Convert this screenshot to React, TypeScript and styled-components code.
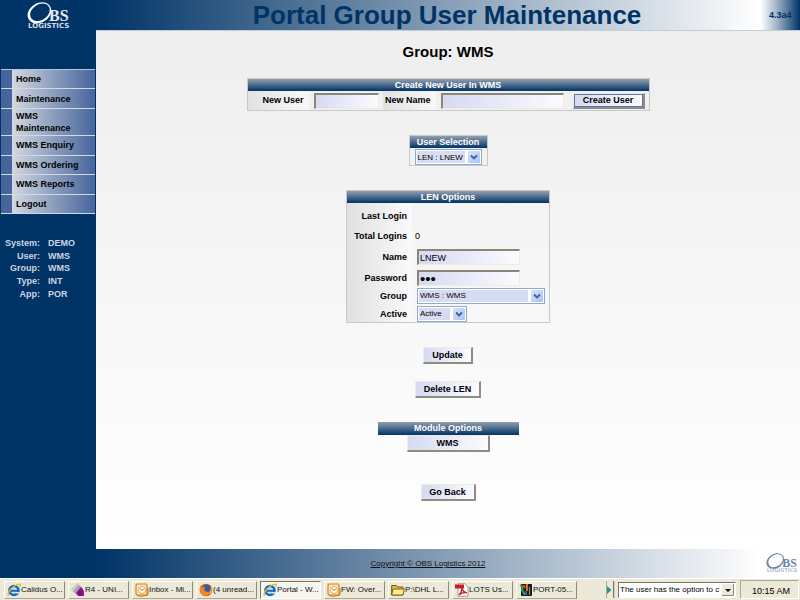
import React from "react";
import styled, { createGlobalStyle, css } from "styled-components";

const NAVY = "#003366";
const SANS = '"Liberation Sans", Arial, sans-serif';

const GlobalStyle = createGlobalStyle`
  *, *::before, *::after { box-sizing: border-box; }
  body { margin: 0; background: #fff; font-family: ${SANS}; font-size: 9px; color: #000; }
  h1, h2, h3, p, dl, dd, ul { margin: 0; padding: 0; }
`;

const Page = styled.div`
  display: flex;
  flex-direction: column;
  min-height: 100vh;
`;

const band = css`
  background: linear-gradient(to right, ${NAVY} 96px, #fff 95%);
`;

const Header = styled.header`
  ${band}
  display: flex;
  height: 30px;
`;

const Brand = styled.div`
  width: 96px;
  padding: 2px 0 0 27px;
`;

const Title = styled.h1`
  flex: 1;
  padding-left: 36px;
  text-align: center;
  font-size: 26px;
  line-height: 30px;
  color: ${NAVY};
  white-space: nowrap;
`;

const Version = styled.div`
  width: 38px;
  padding-left: 7px;
  font-weight: bold;
  line-height: 30px;
  color: ${NAVY};
  background: linear-gradient(to right, #f6f8fa, #a9bbcd 35%, ${NAVY});
`;

const Body = styled.div`
  flex: 1;
  display: flex;
  background: ${NAVY};
`;

const Sidebar = styled.aside`
  width: 96px;
  padding: 39px 1px 0;
  flex: none;
`;

const Menu = styled.ul`
  display: flex;
  flex-direction: column;
  min-height: 145px;
  list-style: none;
  border-top: 1px solid #b9c5d8;
`;

const MenuItem = styled.li`
  flex: 1 0 auto;
  display: flex;
  border-bottom: 1px solid #d3dae6;
  background: linear-gradient(to right, #46659c 11px, #d3d8e0 11px, #46659c);
`;

const MenuLink = styled.a`
  flex: 1;
  display: flex;
  align-items: center;
  min-height: 18px;
  padding: 1px 4px 1px 15px;
  font-weight: bold;
  line-height: 12px;
  color: #000;
  text-decoration: none;
`;

const Session = styled.dl`
  display: grid;
  grid-template-columns: 39px 1fr;
  column-gap: 8px;
  align-items: center;
  min-height: 63px;
  margin-top: 23px;
  font-weight: bold;
  color: #ccd6e2;
`;

const SessionKey = styled.dt`
  text-align: right;
`;

const Main = styled.main`
  flex: 1;
  display: flex;
  flex-direction: column;
  align-items: center;
  padding-bottom: 48px;
  border-top: 1px solid #c3cdd8;
  background: linear-gradient(#eee, #fff);
`;

const GroupName = styled.h2`
  margin: 12px 0 17px;
  font-size: 15px;
  line-height: 18px;
`;

const Panel = styled.section`
  border: 1px solid #c6c8ca;
  margin-bottom: 24px;
`;

const PanelTitle = styled.h3`
  height: 12px;
  font-size: 9px;
  line-height: 12px;
  text-align: center;
  color: #fff;
  background: linear-gradient(#93a0b0, ${NAVY});
`;

const CreateRow = styled.form`
  display: flex;
  align-items: stretch;
  height: 19px;
`;

const CellLabel = styled.label<{ $width: number }>`
  width: ${(p) => p.$width}px;
  padding-right: 5px;
  font-weight: bold;
  line-height: 18px;
  text-align: right;
  background: linear-gradient(to right, #e2e2e2, #f8f8f8);
`;

const Cell = styled.div`
  display: flex;
  align-items: center;
  padding: 0 4px 0 5px;
`;

const TextInput = styled.input<{ $width: number }>`
  width: ${(p) => p.$width}px;
  height: 16px;
  padding: 0 1px;
  font: 9px ${SANS};
  color: #000;
  border: 1px solid;
  border-width: 2px 1px 1px 2px;
  border-color: #8a8778 #efede2 #efede2 #8a8778;
  border-radius: 0;
  background: linear-gradient(to right, #d6daf2, #fbfbfe);
  outline: none;

  &[type="password"] { font-size: 15px; }
`;

const Button = styled.button<{ $width: number; $focused?: boolean }>`
  width: ${(p) => p.$width}px;
  height: 17px;
  padding: 0;
  font: bold 9px ${SANS};
  color: #000;
  border: 2px solid;
  border-color: #efede0 #8f8c80 #8f8c80 #efede0;
  border-width: 1px 2px 2px 1px;
  border-radius: 0;
  background: linear-gradient(to right, #d5daf3, #fbfbff);
  ${(p) => p.$focused && css`
    height: 16px;
    box-shadow: inset 0 0 0 1px #5877ac;
  `}
`;

const SelectBox = styled.span<{ $width: number }>`
  position: relative;
  display: inline-flex;
  width: ${(p) => p.$width}px;
  height: 16px;
  padding: 1px;
  border: 1px solid #8fabc9;
  background: #fff;

  select {
    flex: 1;
    min-width: 0;
    margin-right: 15px;
    padding: 0 1px;
    appearance: none;
    border: 0;
    border-radius: 0;
    outline: none;
    font: 8px ${SANS};
    color: #000;
    background: #d8dcf2;
  }

  svg {
    position: absolute;
    top: 1px;
    right: 1px;
    pointer-events: none;
  }
`;

const SelectionRow = styled.div`
  display: flex;
  justify-content: center;
  padding: 1px 5px 0;
`;

const OptionsForm = styled.form`
  display: grid;
  grid-template-columns: 65px 1fr;
  grid-template-rows: 20px 19px 24px 17px 19px 17px;
  align-items: center;
  padding-top: 3px;
  background: linear-gradient(to right, #e0e0e0, #fafafa) no-repeat 0 0 / 65px 100%;
`;

const OptionLabel = styled.label`
  padding-right: 5px;
  font-weight: bold;
  text-align: right;
`;

const OptionValue = styled.div`
  display: flex;
  padding: 0 4px 0 5px;
`;

const PlainValue = styled.output`
  padding-left: 3px;
`;

const Actions = styled.div`
  display: flex;
  flex-direction: column;
  align-items: center;
  gap: 17px;
  margin-bottom: 24px;
`;

const Modules = styled.section`
  display: flex;
  flex-direction: column;
  align-items: center;
  width: 141px;
  margin-bottom: 32px;

  h3 { width: 100%; height: 13px; }
`;

const Footer = styled.footer`
  ${band}
  display: flex;
  align-items: center;
  height: 29px;
  padding: 0 2px 0 90px;
`;

const Copyright = styled.a`
  margin: 0 auto;
  font-size: 8px;
  color: #111;
  text-decoration: underline;
`;

const Taskbar = styled.nav`
  display: flex;
  align-items: center;
  height: 23px;
  padding: 0 1px 0 4px;
  border-top: 1px solid #fff;
  border-bottom: 1px solid #8e8b7d;
  background: #ece9d8;
`;

const TaskList = styled.div`
  display: grid;
  grid-template-columns: repeat(9, 61px);
  gap: 3px;
`;

const Task = styled.button<{ $active?: boolean }>`
  display: flex;
  align-items: center;
  height: 18px;
  padding: 0 0 0 2px;
  font: 8px ${SANS};
  color: #111;
  white-space: nowrap;
  border: 1px solid;
  border-color: #fffef8 #8e8b7d #aca899 #fffef8;
  border-radius: 0;
  background: #ece9d8;
  ${(p) => p.$active && css`
    border-color: #77756a #fff #fff #77756a;
    background: #f6f5ef;
  `}
  svg { flex: none; }
`;

const Grip = styled.span`
  display: flex;
  align-items: center;
  width: 9px;
  height: 17px;
  margin-left: auto;
  margin-right: 3px;
  border-left: 1px solid #aca899;
  border-right: 2px groove #cfccbd;
`;

const AddressBox = styled.span`
  position: relative;
  display: flex;
  width: 118px;
  height: 16px;
  border: 1px solid;
  border-color: #77756a #fff #fff #77756a;
  background: #fff;

  select {
    flex: 1;
    min-width: 0;
    margin-right: 12px;
    padding: 0 0 0 1px;
    appearance: none;
    border: 0;
    border-radius: 0;
    outline: none;
    font: 8px ${SANS};
    color: #000;
    background: #fff;
    text-overflow: clip;
  }

  svg {
    position: absolute;
    top: 1px;
    right: 1px;
    pointer-events: none;
  }
`;

const Clock = styled.time`
  width: 59px;
  height: 19px;
  margin-left: 4px;
  padding: 3px 8px 0 0;
  text-align: right;
  font-size: 9px;
  line-height: 14px;
  border: 1px solid;
  border-color: #aca899 #fff #fff #aca899;
`;

function ObsLogo({ width, ring, ink, small }: { width: number; ring: string; ink: string; small: string }) {
  return (
    <svg width={width} viewBox="0 0 43 27" role="img" aria-label="OBS Logistics">
      <g transform="rotate(-32 12.5 11)">
        <path
          fillRule="evenodd"
          fill={ring}
          d="M12.5 1.2c7 0 12.600 4.200 12.600 9.600s-5.600 9.700-12.600 9.700S0 16.200 0 10.800 5.500 1.200 12.500 1.200zM13.300 2.900c-6 0-10.600 3.500-10.600 7.900s4.500 7.600 10.400 7.600 10.700-3.300 10.700-7.700-4.500-7.800-10.500-7.800z"
        />
      </g>
      <text x="22" y="19" fontFamily="Liberation Serif, serif" fontWeight="bold" fontSize="16" fill={ink}>BS</text>
      <text x="1" y="26" fontFamily="DejaVu Sans, sans-serif" fontWeight="bold" fontSize="7" fill={small}>LOGISTICS</text>
    </svg>
  );
}

function SelectArrow() {
  return (
    <svg width="12" height="12" viewBox="0 0 12 12" aria-hidden="true">
      <defs>
        <linearGradient id="selectArrowFill" x1="0" y1="0" x2="1" y2="1">
          <stop offset="0" stopColor="#d5e2fd" />
          <stop offset="1" stopColor="#a9c3f7" />
        </linearGradient>
      </defs>
      <rect width="12" height="12" rx="1" fill="url(#selectArrowFill)" />
      <path d="M3 4.500l3 3 3-3" fill="none" stroke="#44618f" strokeWidth="1.800" />
    </svg>
  );
}

function Select({ id, width, value, label }: { id: string; width: number; value: string; label?: string }) {
  return (
    <SelectBox $width={width}>
      <select id={id} aria-label={label} defaultValue={value}>
        <option>{value}</option>
      </select>
      <SelectArrow />
    </SelectBox>
  );
}

type IconName = "ie" | "diamond" | "mail" | "fox" | "folder" | "pdf" | "bars";

const ICONS: Record<IconName, React.ReactNode> = {
  ie: (
    <>
      <circle cx="7" cy="7.500" r="4.500" fill="#bfe3fa" stroke="#1769c0" strokeWidth="2.600" />
      <path d="M4 7.800h8" stroke="#1769c0" strokeWidth="2" />
      <path d="M9 9.800h4" stroke="#ece9d8" strokeWidth="1.500" />
      <path d="M1.500 13C-.5 10 6 2 12.500 1.200c1.300 0 .9 1.800.2 2.800" fill="none" stroke="#e8b42a" strokeWidth="1.300" />
    </>
  ),
  diamond: (
    <>
      <path d="M0 6.500L6.500 0 12 6 6 12z" fill="#a5a5a9" />
      <path d="M0 6.500L6.500 0 8 1.600 2 8.500z" fill="#cfcfd2" />
      <path d="M5 10l5-6 3 4v5H7z" fill="#96119b" />
      <path d="M9 8v5" stroke="#4a0752" />
    </>
  ),
  mail: (
    <>
      <rect x="1" y="1" width="11" height="11" rx="1.500" fill="#fbe3b4" stroke="#d9822b" strokeWidth="1.200" />
      <circle cx="7" cy="7" r="3.600" fill="#fffbe8" stroke="#e8b45c" />
      <path d="M5 5.500l2 2.300 2.300-2.300" stroke="#b87426" fill="none" />
      <path d="M2 12.500l4 .8 7-1.300V5" fill="none" stroke="#c5772a" />
    </>
  ),
  fox: (
    <>
      <circle cx="7" cy="7" r="6.300" fill="#d9541a" />
      <circle cx="7.500" cy="5.800" r="4" fill="#2b5fb0" />
      <path d="M1 3l2 1.500c1-1 2.300-.8 3 0L5 6.500c1 2.500 4 3 6 1.500-.5 4-3 5-5 5C2.500 13 .5 9 1 3z" fill="#f08a1f" />
      <path d="M12 3c1.500 3 1 7-2 9 1.500-3 2-6 2-9z" fill="#f8c53a" />
    </>
  ),
  folder: (
    <>
      <path d="M.7 12V2.500h4.600L6.500 4H12v8z" fill="#e9bd3c" stroke="#5c4a10" strokeWidth=".9" />
      <path d="M.7 12L2 6h11.300L12 12z" fill="#ffe98a" stroke="#6d5713" strokeWidth=".9" />
    </>
  ),
  pdf: (
    <>
      <path d="M3 .7h7L13 4v9.300H3z" fill="#fff" stroke="#8c8c8c" strokeWidth=".8" />
      <rect x="0" y="1.500" width="9" height="4" fill="#c81e24" />
      <path d="M4 12c2-2 3-5 2.800-7.500C7.500 8 9 9.500 12 9.800 9 9.500 6 10 4 12z" fill="none" stroke="#c81e24" strokeWidth="1.300" />
    </>
  ),
  bars: (
    <>
      <rect x="2" y="1" width="11" height="12" rx="1" fill="#191919" />
      <path d="M1 2l3 2-1 3 3 5" stroke="#37a04a" strokeWidth="2" fill="none" />
      <path d="M5 2l1 3" stroke="#e03c2b" strokeWidth="2" />
      <path d="M8 1v7" stroke="#f2922c" strokeWidth="1.600" />
      <path d="M10.500 4v8" stroke="#8e8e8e" strokeWidth="1.200" />
      <path d="M6.500 8l1 4" stroke="#3b6fd0" strokeWidth="1.600" />
    </>
  ),
};

const TASKS: { icon: IconName; text: string; active?: boolean }[] = [
  { icon: "ie", text: "Calidus O..." },
  { icon: "diamond", text: "R4 - UNI..." },
  { icon: "mail", text: "Inbox - Mi..." },
  { icon: "fox", text: "(4 unread..." },
  { icon: "ie", text: "Portal - W...", active: true },
  { icon: "mail", text: "FW: Over..." },
  { icon: "folder", text: "P:\\DHL L..." },
  { icon: "pdf", text: "LOTS Us..." },
  { icon: "bars", text: "PORT-05..." },
];

const MENU = ["Home", "Maintenance", "WMS Maintenance", "WMS Enquiry", "WMS Ordering", "WMS Reports", "Logout"];

const SESSION = [
  ["System:", "DEMO"],
  ["User:", "WMS"],
  ["Group:", "WMS"],
  ["Type:", "INT"],
  ["App:", "POR"],
];

export default function App() {
  return (
    <Page>
      <GlobalStyle />
      <Header>
        <Brand>
          <ObsLogo width={43} ring="#fff" ink="#e4e8f0" small="#d4dbe6" />
        </Brand>
        <Title>Portal Group User Maintenance</Title>
        <Version>4.3a4</Version>
      </Header>

      <Body>
        <Sidebar>
          <Menu>
            {MENU.map((item) => (
              <MenuItem key={item}>
                <MenuLink href="#">{item}</MenuLink>
              </MenuItem>
            ))}
          </Menu>
          <Session>
            {SESSION.map(([key, value]) => (
              <React.Fragment key={key}>
                <SessionKey>{key}</SessionKey>
                <dd>{value}</dd>
              </React.Fragment>
            ))}
          </Session>
        </Sidebar>

        <Main>
          <GroupName>Group: WMS</GroupName>

          <Panel>
            <PanelTitle>Create New User In WMS</PanelTitle>
            <CreateRow onSubmit={(e) => e.preventDefault()}>
              <CellLabel $width={61} htmlFor="newUser">New User</CellLabel>
              <Cell><TextInput id="newUser" $width={65} /></Cell>
              <CellLabel $width={53} htmlFor="newName">New Name</CellLabel>
              <Cell><TextInput id="newName" $width={123} /></Cell>
              <Cell><Button $width={72} $focused>Create User</Button></Cell>
            </CreateRow>
          </Panel>

          <Panel>
            <PanelTitle>User Selection</PanelTitle>
            <SelectionRow>
              <Select id="userSelection" width={67} value="LEN : LNEW" label="User Selection" />
            </SelectionRow>
          </Panel>

          <Panel>
            <PanelTitle>LEN Options</PanelTitle>
            <OptionsForm onSubmit={(e) => e.preventDefault()}>
              <OptionLabel htmlFor="lastLogin">Last Login</OptionLabel>
              <PlainValue id="lastLogin" />
              <OptionLabel htmlFor="totalLogins">Total Logins</OptionLabel>
              <PlainValue id="totalLogins">0</PlainValue>
              <OptionLabel htmlFor="name">Name</OptionLabel>
              <OptionValue><TextInput id="name" $width={103} defaultValue="LNEW" /></OptionValue>
              <OptionLabel htmlFor="password">Password</OptionLabel>
              <OptionValue><TextInput id="password" type="password" $width={103} defaultValue="abc" /></OptionValue>
              <OptionLabel htmlFor="group">Group</OptionLabel>
              <OptionValue><Select id="group" width={128} value="WMS : WMS" /></OptionValue>
              <OptionLabel htmlFor="active">Active</OptionLabel>
              <OptionValue><Select id="active" width={50} value="Active" /></OptionValue>
            </OptionsForm>
          </Panel>

          <Actions>
            <Button $width={50}>Update</Button>
            <Button $width={66}>Delete LEN</Button>
          </Actions>

          <Modules>
            <PanelTitle>Module Options</PanelTitle>
            <Button $width={83}>WMS</Button>
          </Modules>

          <Button $width={55}>Go Back</Button>
        </Main>
      </Body>

      <Footer>
        <Copyright href="#">Copyright © OBS Logistics 2012</Copyright>
        <ObsLogo width={32} ring="#6d84a5" ink="#6d84a5" small="#b3c0d2" />
      </Footer>

      <Taskbar>
        <TaskList>
          {TASKS.map((task) => (
            <Task key={task.text} $active={task.active}>
              <svg width="14" height="14" viewBox="0 0 14 14" aria-hidden="true">{ICONS[task.icon]}</svg>
              {task.text}
            </Task>
          ))}
        </TaskList>
        <Grip>
          <svg width="5" height="8" viewBox="0 0 5 8" aria-hidden="true">
            <path d="M0 0l4.500 4L0 8z" fill="#2f8f8a" />
          </svg>
        </Grip>
        <AddressBox>
          <select aria-label="Address" defaultValue="The user has the option to c">
            <option>The user has the option to c</option>
          </select>
          <svg width="12" height="12" viewBox="0 0 12 12" aria-hidden="true">
            <path d="M0 0h12v12H0z" fill="#ece9d8" />
            <path d="M11.500 0v11.500H0" fill="none" stroke="#8e8b7d" />
            <path d="M3 5h6L6 8z" fill="#000" />
          </svg>
        </AddressBox>
        <Clock>10:15 AM</Clock>
      </Taskbar>
    </Page>
  );
}
